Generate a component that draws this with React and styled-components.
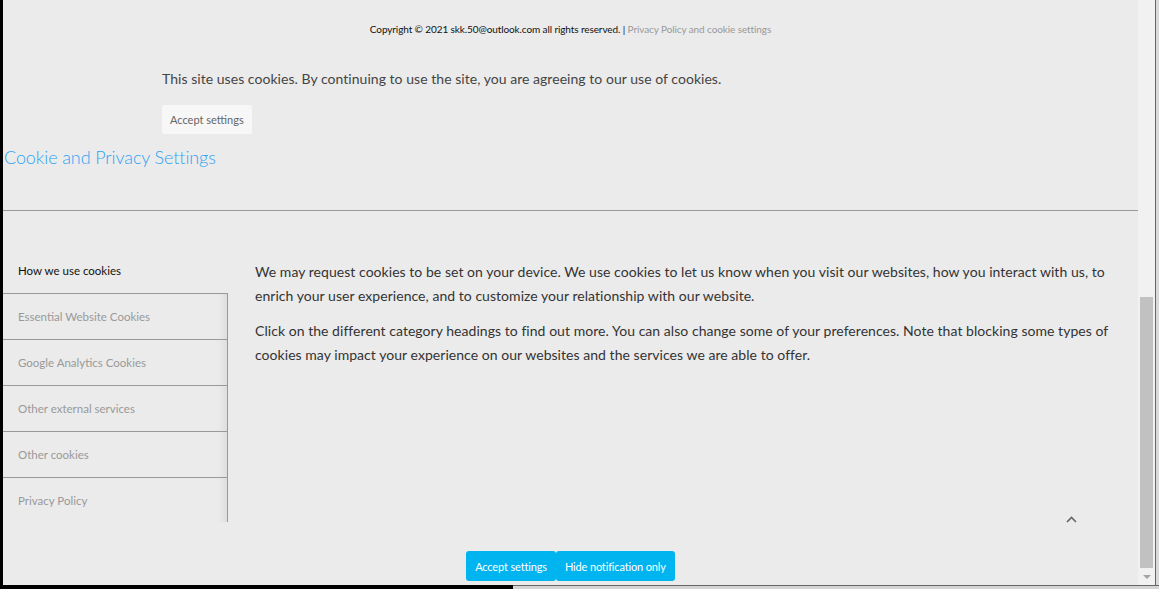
import styled, { createGlobalStyle } from "styled-components";

const GlobalStyle = createGlobalStyle`
  html, body {
    margin: 0;
    padding: 0;
  }

  body {
    background: #ebebeb;
    font-family: Lato, "Open Sans", sans-serif;
    overflow: hidden;
  }
`;

const tabs = [
  "How we use cookies",
  "Essential Website Cookies",
  "Google Analytics Cookies",
  "Other external services",
  "Other cookies",
  "Privacy Policy",
];

const App = () => {
  return (
    <>
      <GlobalStyle />
      <Screen>
        <Window>
          <Viewport>
            <Copyright>
              Copyright © 2021 skk.50@outlook.com all rights reserved. |{" "}
              <span>Privacy Policy and cookie settings</span>
            </Copyright>
            <Notice>
              <p>
                This site uses cookies. By continuing to use the site, you are
                agreeing to our use of cookies.
              </p>
              <LightButton>Accept settings</LightButton>
            </Notice>
            <Title>Cookie and Privacy Settings</Title>
            <Divider />
            <Settings>
              <TabList>
                {tabs.map((t, i) => (
                  <Tab key={t} $active={i === 0}>
                    {t}
                  </Tab>
                ))}
              </TabList>
              <TabContent>
                <p>
                  We may request cookies to be set on your device. We use
                  cookies to let us know when you visit our websites, how you
                  interact with us, to enrich your user experience, and to
                  customize your relationship with our website.
                </p>
                <p>
                  Click on the different category headings to find out more.
                  You can also change some of your preferences. Note that
                  blocking some types of cookies may impact your experience on
                  our websites and the services we are able to offer.
                </p>
              </TabContent>
            </Settings>
            <ScrollTop>
              <svg width="11" height="7" viewBox="0 0 11 7">
                <path
                  d="M1 6 L5.5 1.5 L10 6"
                  fill="none"
                  stroke="#666"
                  strokeWidth="1.6"
                />
              </svg>
            </ScrollTop>
            <Actions>
              <BlueButton>Accept settings</BlueButton>
              <BlueButton>Hide notification only</BlueButton>
            </Actions>
          </Viewport>
          <Scrollbar>
            <Thumb />
            <ArrowDown />
          </Scrollbar>
          <Edge />
        </Window>
        <BottomEdge>
          <div />
        </BottomEdge>
      </Screen>
    </>
  );
};

export default App;

// Styled components

const Screen = styled.div`
  width: 1159px;
  height: 589px;
  display: flex;
  flex-direction: column;
`;

const Window = styled.div`
  display: flex;
  height: 585px;
`;

const Viewport = styled.div`
  position: relative;
  flex: 1;
  display: flex;
  flex-direction: column;
  border-left: 3px solid #000000;
  background: #ebebeb;
`;

const Copyright = styled.p`
  margin: 22px 0 0;
  text-align: center;
  font-size: 10px;
  line-height: 14px;
  letter-spacing: -0.1px;
  color: #111111;

  span {
    color: #999999;
  }
`;

const Notice = styled.div`
  margin-top: 33px;
  padding-left: 159px;

  p {
    margin: 0;
    font-size: 14px;
    line-height: 20px;
    letter-spacing: 0.04px;
    color: #444444;
  }
`;

const LightButton = styled.button`
  margin-top: 16px;
  height: 29px;
  padding: 0 8px;
  border: none;
  border-radius: 2px;
  background: #f7f7f7;
  font-family: Lato, sans-serif;
  font-size: 11px;
  color: #666666;
`;

const Title = styled.h2`
  margin: 11px 0 0 1px;
  font-size: 18px;
  line-height: 24px;
  font-weight: 300;
  letter-spacing: -0.1px;
  color: #2ea3f2;
`;

const Divider = styled.hr`
  margin: 41px 0 0;
  border: none;
  border-top: 1px solid #999999;
`;

const Settings = styled.div`
  display: flex;
  margin-top: 36px;
  gap: 27px;
`;

const TabList = styled.ul`
  margin: 0;
  padding: 0;
  list-style: none;
  width: 225px;
  flex-shrink: 0;
`;

const Tab = styled.li`
  height: 46px;
  box-sizing: border-box;
  display: flex;
  align-items: center;
  padding-left: 15px;
  font-size: 11.5px;
  color: ${(p) => (p.$active ? "#111111" : "#999999")};
  border-top: ${(p) => (p.$active ? "none" : "1px solid #999999")};
  border-right: ${(p) => (p.$active ? "none" : "1px solid #999999")};
  box-shadow: ${(p) =>
    p.$active ? "none" : "inset -10px 0 10px -8px rgba(0, 0, 0, 0.08)"};

  &:last-child {
    height: 45px;
  }
`;

const TabContent = styled.div`
  padding-top: 13px;
  width: 870px;

  p {
    margin: 0 0 11px;
    font-size: 14px;
    line-height: 24px;
    letter-spacing: 0.045px;
    color: #333333;
  }
`;

const ScrollTop = styled.div`
  position: absolute;
  left: 1063px;
  top: 516px;
  display: flex;
`;

const Actions = styled.div`
  display: flex;
  justify-content: center;
  margin-top: 29px;
`;

const BlueButton = styled.button`
  height: 30px;
  padding: 0 9px;
  border: none;
  border-radius: 3px;
  background: #00b4f0;
  color: #ffffff;
  font-family: Lato, sans-serif;
  font-size: 11px;
  letter-spacing: -0.15px;
`;

const Scrollbar = styled.div`
  position: relative;
  width: 17px;
  background: #f1f1f1;
  display: flex;
  flex-direction: column;
  justify-content: flex-end;
  align-items: center;
`;

const Thumb = styled.div`
  width: 13px;
  height: 271px;
  background: #c1c1c1;
`;

const ArrowDown = styled.div`
  height: 17px;
  width: 17px;
  display: flex;
  align-items: center;
  justify-content: center;

  &::before {
    content: "";
    border-left: 4px solid transparent;
    border-right: 4px solid transparent;
    border-top: 4px solid #a3a3a3;
  }
`;

const Edge = styled.div`
  width: 3px;
  border-left: 1px solid #666666;
  background: #d9d9d9;
`;

const BottomEdge = styled.div`
  height: 4px;
  background: #d4d4d4;
  border-top: 1px solid #666666;
  box-sizing: border-box;

  div {
    width: 513px;
    height: 4px;
    margin-top: -1px;
    background: #000000;
  }
`;
